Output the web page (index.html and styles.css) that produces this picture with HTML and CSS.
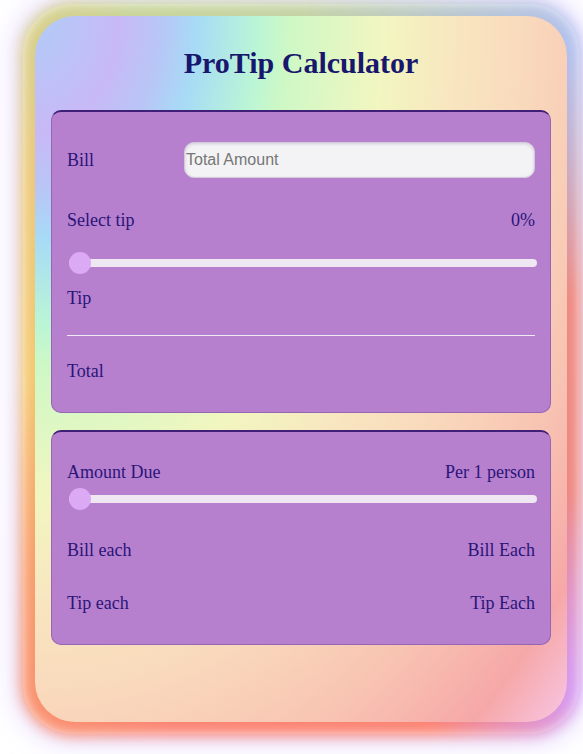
FILE: index.html
```html
<!DOCTYPE html>
<html lang="en">
<head>
<meta charset="utf-8">
<title>ProTip Calculator</title>
<link rel="stylesheet" href="styles.css">
</head>
<body>
<main class="card">
  <h1 class="title">ProTip Calculator</h1>
  <section class="panel panel-bill">
    <div class="row bill-row">
      <label class="label bill-label" for="bill">Bill</label>
      <input class="amount" id="bill" type="text" placeholder="Total Amount">
    </div>
    <div class="row select-row">
      <span class="label">Select tip</span>
      <span class="label">0%</span>
    </div>
    <input class="slider tip-slider" type="range" min="0" max="100" value="0">
    <div class="row tip-row"><span class="label">Tip</span></div>
    <hr class="divider">
    <div class="row total-row"><span class="label">Total</span></div>
  </section>
  <section class="panel panel-split">
    <div class="row due-row">
      <span class="label">Amount Due</span>
      <span class="label">Per 1 person</span>
    </div>
    <input class="slider split-slider" type="range" min="1" max="20" value="1">
    <div class="row each-row">
      <span class="label">Bill each</span>
      <span class="label">Bill Each</span>
    </div>
    <div class="row each-row tip-each">
      <span class="label">Tip each</span>
      <span class="label">Tip Each</span>
    </div>
  </section>
</main>
</body>
</html>
```

FILE: styles.css
```css
html {
  background: #ffffff;
}

body {
  margin: 0;
  min-height: 754px;
  box-sizing: border-box;
  font-family: "Liberation Serif", "Times New Roman", serif;
  padding: 16px 0 32px 35px;
}

.card {
  position: relative;
  width: 532px;
  height: 706px;
  box-sizing: border-box;
  padding: 24px 16px;
  border-radius: 40px;
  background: radial-gradient(ellipse 600px 830px at 0 0,
    #b0ccf8 0%,
    #c8b9f6 14%,
    #b8c6f6 21%,
    #a7dbf6 27%,
    #baf5d6 37%,
    #cdf8c6 42%,
    #f2f6c0 58%,
    #f8e6c0 70%,
    #f9d9bc 82%,
    #f8c3b2 98%,
    #f6a8a8 112%,
    #f8c6e6 123%);
}

.card::before {
  content: "";
  position: absolute;
  inset: -14px;
  border-radius: 52px;
  background: conic-gradient(from 0deg,
    #c4d2a4 0deg,
    #b2c0ee 40deg,
    #ee8880 75deg,
    #ee8680 115deg,
    #d49af2 140deg,
    #fc8474 160deg,
    #fb8474 200deg,
    #f89c6c 232deg,
    #f4c870 268deg,
    #ecc878 305deg,
    #c8d49a 335deg,
    #c4d2a4 360deg);
  filter: blur(7px);
  z-index: -1;
}

.card::after {
  content: "";
  position: absolute;
  inset: -12px;
  border-radius: 50px;
  box-shadow: 0 0 28px 9px rgba(212, 190, 255, 0.5);
  z-index: -2;
}

.title {
  margin: 0 0 24px;
  height: 46px;
  line-height: 46px;
  text-align: center;
  font-size: 30px;
  font-weight: bold;
  color: #17176e;
}

.panel {
  box-sizing: border-box;
  width: 500px;
  padding: 30px 15px 0 15px;
  background: #b780cf;
  border: 1px solid #9566b4;
  border-top: 2px solid #3f1f78;
  border-radius: 10px;
  display: flex;
  flex-direction: column;
}

.panel-bill {
  height: 303px;
}

.panel-split {
  height: 215px;
  margin-top: 17px;
}

.row {
  display: flex;
  justify-content: space-between;
  align-items: center;
}

.label {
  font-size: 18px;
  line-height: 20px;
  color: #2a1577;
}

.bill-row {
  height: 36px;
}

.bill-label {
  width: 117px;
  flex: none;
}

.amount {
  flex: 1;
  box-sizing: border-box;
  height: 36px;
  margin: 0;
  padding: 0 0 0 1px;
  border: 1px solid #d3cbd9;
  border-radius: 10px;
  background: #f3f3f5;
  box-shadow: inset 0 1px 3px rgba(60, 30, 90, 0.18);
  font-family: "Liberation Sans", Arial, sans-serif;
  font-size: 16px;
  color: #333;
  outline: none;
}

.amount::placeholder {
  color: #767676;
}

.select-row {
  margin-top: 32px;
}

.slider {
  -webkit-appearance: none;
  appearance: none;
  width: 468px;
  height: 22px;
  margin: 0 0 0 2px;
  padding: 0;
  background: transparent;
}

.slider::-webkit-slider-runnable-track {
  height: 8px;
  border-radius: 4px;
  background: #efe7f1;
}

.slider::-webkit-slider-thumb {
  -webkit-appearance: none;
  appearance: none;
  width: 22px;
  height: 22px;
  margin-top: -7px;
  border-radius: 50%;
  background: #dcaaf5;
  border: none;
}

.tip-slider {
  margin-top: 22px;
}

.tip-row {
  margin-top: 14px;
}

.divider {
  margin: 27px 0 0;
  height: 0;
  border: none;
  border-top: 1px solid #f1e9f3;
}

.total-row {
  margin-top: 25px;
}

.split-slider {
  margin-top: 6px;
}

.each-row {
  margin-top: 30px;
}

.tip-each {
  margin-top: 33px;
}
```
